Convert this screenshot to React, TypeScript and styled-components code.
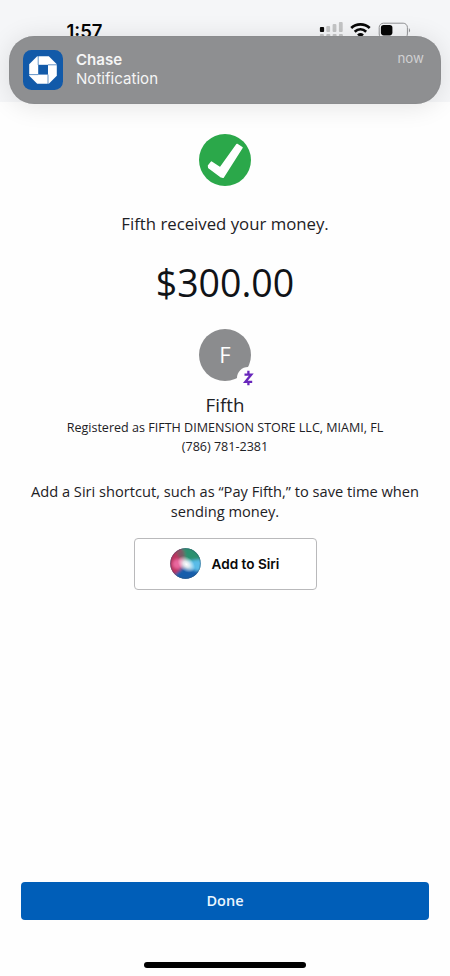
import React from "react";
import styled, { createGlobalStyle } from "styled-components";

const GlobalStyle = createGlobalStyle`
  * { box-sizing: border-box; }
  body { margin: 0; background: #fefefe; }
  button { border: 0; padding: 0; margin: 0; }
`;

const Screen = styled.div`
  position: relative;
  display: flex;
  flex-direction: column;
  width: 450px;
  height: 976px;
  overflow: hidden;
  background: #fefefe;
  color: #1d2125;
  font-family: "Open Sans", "Noto Sans", sans-serif;
`;

const StatusBar = styled.header`
  display: flex;
  flex: none;
  justify-content: space-between;
  height: 102px;
  padding: 20px 37px 0 66.5px;
  background: #f5f6f8;
`;

const Clock = styled.time`
  color: #050505;
  font: 600 18.5px/22px Inter, "Liberation Sans", sans-serif;
  letter-spacing: 0;
`;

const StatusIcons = styled.svg`
  width: 94px;
  height: 24px;
`;

const Banner = styled.section`
  position: absolute;
  top: 36px;
  left: 9px;
  display: flex;
  gap: 13px;
  width: 432px;
  height: 68px;
  padding: 14px 17px 0 14px;
  border-radius: 25px;
  background: #8e8f91;
  box-shadow: 0 2px 26px rgba(0, 0, 0, 0.11), inset 0 0 1px rgba(110, 110, 112, 0.6);
  font-family: Inter, "Liberation Sans", sans-serif;
`;

const AppIcon = styled.svg`
  flex: none;
  width: 40px;
  height: 40px;
`;

const BannerText = styled.div`
  flex: 1;
  color: #f5f5f5;
  font-size: 15.1px;
  line-height: 19px;
`;

const BannerTitle = styled.div`
  font-weight: 600;
`;

const BannerTime = styled.div`
  color: #d0d0d1;
  font-size: 13.3px;
  line-height: 16px;
`;

const Content = styled.main`
  display: flex;
  flex: 1;
  flex-direction: column;
  align-items: center;
  padding-top: 32px;
  text-align: center;
`;

const SuccessMark = styled.svg`
  width: 52px;
  height: 52px;
`;

const Message = styled.p`
  margin: 26px 0 0;
  font-size: 16.75px;
  line-height: 24px;
`;

const Amount = styled.div`
  margin-top: 20px;
  color: #101317;
  font-size: 37.5px;
  line-height: 54px;
`;

const Avatar = styled.svg`
  width: 62px;
  height: 60px;
  margin: 19px 0 0 10px;
`;

const Recipient = styled.div`
  margin-top: 3px;
  font-size: 18.7px;
  line-height: 26px;
`;

const Registration = styled.div`
  margin-top: 1px;
  font-size: 12.55px;
  line-height: 18.5px;
`;

const Hint = styled.p`
  width: 410px;
  margin: 24.5px 0 0;
  font-size: 14.65px;
  line-height: 20px;
`;

const SiriButton = styled.button`
  display: flex;
  align-items: center;
  gap: 11px;
  width: 183px;
  height: 52px;
  margin-top: 17px;
  padding-left: 35px;
  border: 1px solid #b9b9bb;
  border-radius: 4px;
  background: #fff;
  color: #090909;
  font: 600 13.6px/20px Inter, "Liberation Sans", sans-serif;
`;

const SiriOrb = styled.svg`
  width: 31px;
  height: 31px;
`;

const Footer = styled.footer`
  display: flex;
  flex: none;
  flex-direction: column;
  align-items: center;
  height: 94px;
`;

const DoneButton = styled.button`
  width: 408px;
  height: 38px;
  border-radius: 4px;
  background: #005eb8;
  color: #eaf6ff;
  font: 600 14.5px/38px "Open Sans", sans-serif;
`;

const HomeIndicator = styled.div`
  width: 162px;
  height: 6px;
  margin-top: 42px;
  border-radius: 3px;
  background: #000;
`;

function StatusGlyphs() {
  return (
    <StatusIcons viewBox="0 0 94 24" aria-label="Signal, wifi and battery">
      <rect x="0.9" y="7" width="4.2" height="5" rx="1" fill="#080808" />
      <g fill="#c4c5c6">
        <rect x="7.3" y="6" width="3.8" height="6" rx="1" />
        <rect x="13.6" y="4" width="3.8" height="8" rx="1" />
        <rect x="19.9" y="2" width="3.8" height="10" rx="1" />
        <rect x="0.9" y="14" width="4" height="4" rx="1" />
        <rect x="7.3" y="14" width="4" height="4" rx="1" />
        <rect x="13.6" y="14" width="4" height="4" rx="1" />
        <rect x="19.9" y="14" width="4" height="4" rx="1" />
      </g>
      <g fill="none" stroke="#080808" strokeWidth="2.7">
        <path d="M32.2 7.9c5.3-4.8 13.2-4.8 18.5 0" />
        <path d="M35.7 11.7c3.4-3 8.1-3 11.5 0" />
      </g>
      <path d="M38.1 14.5q3.4-2.8 6.8 0l-3.4 3.5z" fill="#080808" />
      <rect x="60.2" y="3.2" width="28.2" height="15" rx="4.2" fill="none" stroke="#929395" />
      <rect x="61.9" y="5" width="11.5" height="10.4" rx="2.8" fill="#050505" />
      <path d="M89.9 8q2.4 2.3 0 4.5z" fill="#929395" />
    </StatusIcons>
  );
}

function ChaseIcon() {
  return (
    <AppIcon viewBox="0 0 40 40" aria-label="Chase">
      <rect width="40" height="40" rx="8.5" fill="#125aa9" />
      <path d="M14.2 6.2h11.6l8 8v11.6l-8 8H14.2l-8-8V14.2z" fill="#fff" />
      <path d="M15.2 14.8h9.8v9.8h-9.8z" fill="#125aa9" />
      <path d="M15.2 6v9M34 14.8h-9M25 34v-9.4M6 24.6h9.2" fill="none" stroke="#125aa9" strokeWidth=".65" />
    </AppIcon>
  );
}

function Orb() {
  return (
    <SiriOrb viewBox="0 0 31 31">
      <defs>
        <clipPath id="orb-clip"><circle cx="15.5" cy="15.5" r="15.2" /></clipPath>
        <filter id="orb-blend" x="-30%" y="-30%" width="160%" height="160%">
          <feGaussianBlur stdDeviation="1.5" />
        </filter>
        <radialGradient id="orb-glow">
          <stop offset="0" stopColor="#fff" />
          <stop offset=".35" stopColor="#fff" stopOpacity=".8" />
          <stop offset="1" stopColor="#fff" stopOpacity="0" />
        </radialGradient>
      </defs>
      <g clipPath="url(#orb-clip)">
        <rect width="31" height="31" fill="#366489" />
        <g filter="url(#orb-blend)">
          <path d="M-2 0h13l3 14-6 12-10 2z" fill="#bd315f" />
          <path d="M11-2h23v15l-18 1z" fill="#29916f" />
          <path d="M17 13l16-2-1 12-11 1z" fill="#5abce8" />
          <path d="M6 25l9-6 15 5-6 10H5z" fill="#175dab" />
          <ellipse cx="8" cy="16" rx="5.5" ry="5" fill="#e9689f" />
          <path d="M6 3l8-1 1 9-6-1z" fill="#785a65" />
        </g>
        <ellipse cx="16.5" cy="16" rx="10" ry="7" transform="rotate(42 16 16)" fill="url(#orb-glow)" />
      </g>
      <circle cx="15.5" cy="15.5" r="14.8" fill="none" stroke="#374d68" strokeOpacity=".3" />
    </SiriOrb>
  );
}

export default function App() {
  return (
    <>
      <GlobalStyle />
      <Screen>
        <StatusBar>
          <Clock>1:57</Clock>
          <StatusGlyphs />
        </StatusBar>
        <Content>
          <SuccessMark viewBox="0 0 52 52" aria-label="Success">
            <circle cx="26" cy="26" r="26" fill="#2ba84a" />
            <path
              d="M9.6 31.7 12.4 28.2 21.2 34 38 10.5 43 13.6 24.1 43.2 22.2 42.8 9.8 33.6z"
              fill="#fff"
              stroke="#fff"
              strokeWidth="1.6"
              strokeLinejoin="round"
            />
          </SuccessMark>
          <Message>Fifth received your money.</Message>
          <Amount>$300.00</Amount>
          <Avatar viewBox="0 0 62 60">
            <circle cx="26" cy="26" r="26" fill="#8b8c8e" />
            <text x="26" y="34" textAnchor="middle" fill="#fff" fontSize="22" fontFamily="Open Sans">F</text>
            <circle cx="49" cy="49" r="11" fill="#fefefe" />
            <path d="M45.5 45.6h6.8l-5.9 7.2h6.8M49.4 41.8v3.4M49.4 53v3.2" fill="none" stroke="#6826bb" strokeWidth="2.3" />
          </Avatar>
          <Recipient>Fifth</Recipient>
          <Registration>
            Registered as FIFTH DIMENSION STORE LLC, MIAMI, FL
            <br />
            (786) 781-2381
          </Registration>
          <Hint>Add a Siri shortcut, such as “Pay Fifth,” to save time when sending money.</Hint>
          <SiriButton><Orb />Add to Siri</SiriButton>
        </Content>
        <Footer>
          <DoneButton>Done</DoneButton>
          <HomeIndicator />
        </Footer>
        <Banner>
          <ChaseIcon />
          <BannerText>
            <BannerTitle>Chase</BannerTitle>
            <div>Notification</div>
          </BannerText>
          <BannerTime>now</BannerTime>
        </Banner>
      </Screen>
    </>
  );
}
